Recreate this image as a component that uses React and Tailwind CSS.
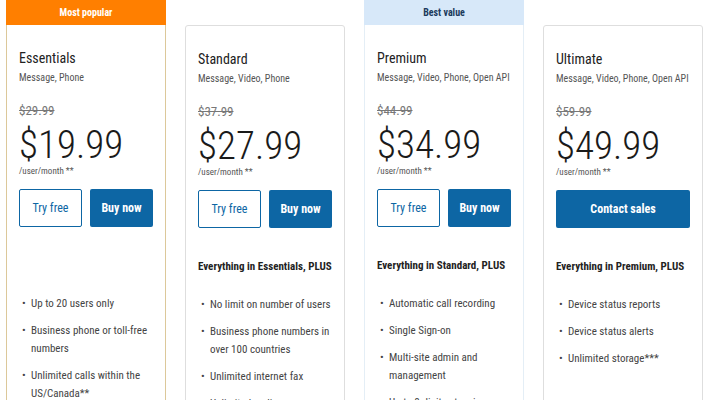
const plans = [
  {
    name: "Essentials",
    apps: "Message, Phone",
    was: "$29.99",
    price: "$19.99",
    badge: "Most popular",
    badgeClass: "bg-[#ff7f00] text-white",
    borderClass: "border-[#dcc89a] rounded-none",
    intro: null,
    features: ["Up to 20 users only", "Business phone or toll-free numbers", "Unlimited calls within the US/Canada**"],
    buttons: "two",
  },
  {
    name: "Standard",
    apps: "Message, Video, Phone",
    was: "$37.99",
    price: "$27.99",
    borderClass: "border-[#dedede] rounded-[3px]",
    intro: "Everything in Essentials, PLUS",
    features: ["No limit on number of users", "Business phone numbers in over 100 countries", "Unlimited internet fax", "Unlimited audio conferencing"],
    buttons: "two",
  },
  {
    name: "Premium",
    apps: "Message, Video, Phone, Open API",
    was: "$44.99",
    price: "$34.99",
    badge: "Best value",
    badgeClass: "bg-[#d7e8f9] text-[#1b3a5c]",
    borderClass: "border-[#e4eef6] rounded-none",
    intro: "Everything in Standard, PLUS",
    features: ["Automatic call recording", "Single Sign-on", "Multi-site admin and management", "Up to 8-digit extensions"],
    buttons: "two",
  },
  {
    name: "Ultimate",
    apps: "Message, Video, Phone, Open API",
    was: "$59.99",
    price: "$49.99",
    borderClass: "border-[#dedede] rounded-[3px]",
    intro: "Everything in Premium, PLUS",
    features: ["Device status reports", "Device status alerts", "Unlimited storage***"],
    buttons: "contact",
  },
];

const narrow = { fontFamily: '"Liberation Sans Narrow", "Roboto Condensed", Roboto, sans-serif' };

function PlanCard({ plan }) {
  return (
    <div className="w-[160px] shrink-0 flex flex-col">
      {plan.badge ? (
        <div className={`h-[25px] flex items-center justify-center text-[10px] font-bold ${plan.badgeClass}`}>{plan.badge}</div>
      ) : (
        <div className="h-[25px]" />
      )}
      <div className={`flex-1 border px-[12px] pt-[24px] pb-6 ${plan.borderClass} ${plan.badge ? "border-t-0" : ""}`}>
        <div className="text-[14px] leading-[18px] text-[#222]">{plan.name}</div>
        <div className="mt-[4px] text-[10px] leading-[14px] text-[#555]">{plan.apps}</div>
        <div className="mt-[18px] text-[13px] leading-[16px] text-[#777] line-through">{plan.was}</div>
        <div className="mt-[6px] text-[39px] leading-[40px] text-[#1a1a1a] font-light">{plan.price}</div>
        <div className="text-[9px] leading-[12px] text-[#555]">/user/month **</div>
        {plan.buttons === "two" ? (
          <div className="mt-[12px] flex gap-[8px]">
            <button className="w-[63px] h-[38px] rounded-[2px] border border-[#0d66a4] bg-white text-[#0d66a4] text-[12px]">Try free</button>
            <button className="w-[63px] h-[38px] rounded-[2px] bg-[#0d66a4] text-white text-[12px] font-bold">Buy now</button>
          </div>
        ) : (
          <div className="mt-[12px]">
            <button className="w-full h-[38px] rounded-[2px] bg-[#0d66a4] text-white text-[12px] font-bold">Contact sales</button>
          </div>
        )}
        <div className="mt-[31px] h-[16px] text-[11px] leading-[16px] text-[#222] font-bold">{plan.intro}</div>
        <ul className="mt-[21px] flex flex-col gap-[9px]">
          {plan.features.map((f) => (
            <li key={f} className="flex text-[11px] leading-[18px] text-[#444]">
              <span className="w-[12px] shrink-0 pl-[3px]">•</span>
              <span>{f}</span>
            </li>
          ))}
        </ul>
      </div>
    </div>
  );
}

export default function App() {
  return (
    <div className="w-[710px] h-[400px] overflow-hidden bg-white" style={narrow}>
      <div className="flex gap-[19px] pl-[6px]">
        {plans.map((p) => (
          <PlanCard key={p.name} plan={p} />
        ))}
      </div>
    </div>
  );
}
